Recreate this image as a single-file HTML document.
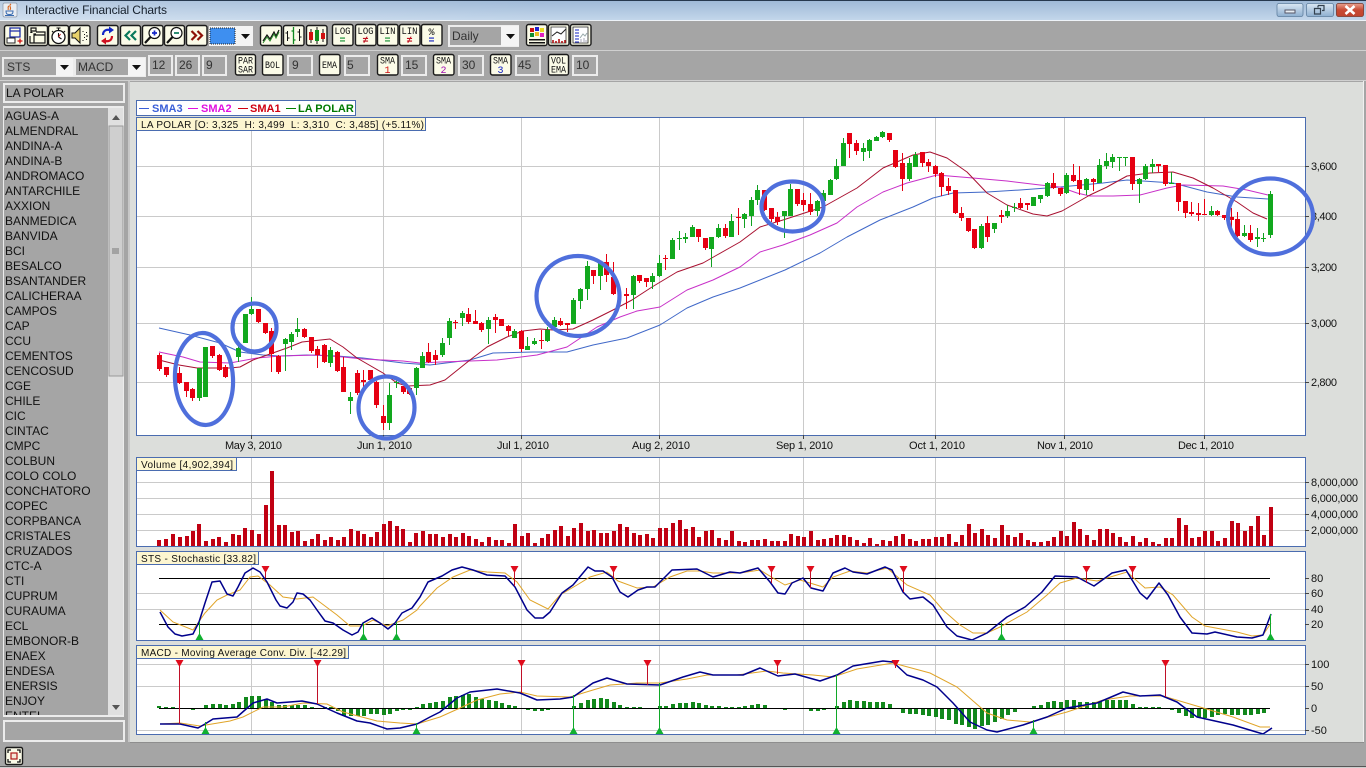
<!DOCTYPE html>
<html><head><meta charset="utf-8"><title>Interactive Financial Charts</title>
<style>
html,body{margin:0;padding:0;background:#a5a5a5;overflow:hidden}
svg{display:block}
text{font-family:"Liberation Sans",Arial,sans-serif;fill:#111}
.c{shape-rendering:crispEdges}
.btn{fill:#fbfbe8;stroke:#1a1a1a;stroke-width:1.4}
.inp{fill:#a5a5a5;stroke:#ececec;stroke-width:2}
.m{font-family:"Liberation Mono",monospace;font-size:10px}
.ax{font-size:11px;fill:#222}
.lb{font-size:10px;fill:#111;white-space:pre}
.li{font-size:12px;fill:#111}
.v{font-size:12px;fill:#333}
</style></head><body>
<svg width="1366" height="768" viewBox="0 0 1366 768" xmlns="http://www.w3.org/2000/svg">
<defs>
<linearGradient id="tb" x1="0" y1="0" x2="0" y2="1"><stop offset="0" stop-color="#9db8d6"/><stop offset="1" stop-color="#c3d6ea"/></linearGradient>
<linearGradient id="tb2" x1="0" y1="0" x2="1" y2="0"><stop offset="0" stop-color="#ffffff" stop-opacity=".25"/><stop offset=".4" stop-color="#ffffff" stop-opacity="0"/></linearGradient>
<linearGradient id="wb" x1="0" y1="0" x2="0" y2="1"><stop offset="0" stop-color="#dbe8f4"/><stop offset=".5" stop-color="#b4cbe2"/><stop offset="1" stop-color="#8fb0d0"/></linearGradient>
<linearGradient id="cb" x1="0" y1="0" x2="0" y2="1"><stop offset="0" stop-color="#e8a290"/><stop offset=".5" stop-color="#c84a34"/><stop offset="1" stop-color="#c0442e"/></linearGradient>
<clipPath id="lc"><rect x="3" y="108" width="104" height="607"/></clipPath>
</defs>

<!-- window background -->
<rect width="1366" height="768" fill="#a5a5a5"/>
<rect width="1366" height="20" fill="url(#tb)"/>
<rect width="1366" height="20" fill="url(#tb2)"/>
<rect class="c" width="1366" height="1" fill="#26384e"/>
<rect class="c" y="20" width="1366" height="1" fill="#eef3f8"/>
<rect class="c" y="50" width="1366" height="1" fill="#d0d0d0"/>
<rect class="c" y="80" width="1366" height="1" fill="#d0d0d0"/>

<!-- title -->
<rect x="3" y="3" width="14" height="14" rx="1.5" fill="#e9edf2" stroke="#8a97a8" stroke-width=".7"/>
<path d="M11 4c-3 2 1 3-1 6M9 6c-2 1 0 2-1 4" stroke="#d8641c" stroke-width="1.1" fill="none"/>
<path d="M6 11h7c0 3-1 3.500-3.500 3.500S6 14 6 11zM5 15.500h9" stroke="#3a6cb0" stroke-width="1" fill="none"/>
<text x="25" y="14" font-size="12" textLength="142" style="fill:#16202c">Interactive Financial Charts</text>
<rect x="1277" y="3.500" width="26" height="13" rx="2" fill="url(#wb)" stroke="#5f7f9f" stroke-width=".8"/>
<rect class="c" x="1285" y="10" width="10" height="3" fill="#e8eef4" stroke="#556" stroke-width=".8"/>
<rect x="1306.500" y="3.500" width="27" height="13" rx="2" fill="url(#wb)" stroke="#5f7f9f" stroke-width=".8"/>
<path d="M1318 5.500h6v5h-2M1318 5.500v2M1314.500 8.500h6v5.500h-6z" fill="none" stroke="#33404e" stroke-width="1.200"/>
<rect x="1336.500" y="3.500" width="27" height="13" rx="2" fill="url(#cb)" stroke="#7a3428" stroke-width=".8"/>
<path d="M1345.500 6l9 8M1354.500 6l-9 8" stroke="#fff" stroke-width="2.600"/>

<!-- toolbar 1 -->
<g>
<g transform="translate(4,25)"><rect class="btn" x=".5" y=".5" width="20.500" height="20" rx="2"/>
<path d="M6 3h10v9H6zM6 6h10" fill="none" stroke="#1c2ea8" stroke-width="1.300"/><path d="M3 13h8v5H3z" fill="#fff" stroke="#222"/><path d="M13.500 16h5M16 13.500v5" stroke="#d01010" stroke-width="1.300"/></g>
<g transform="translate(27,25)"><rect class="btn" x=".5" y=".5" width="20" height="20" rx="2"/>
<path d="M4 3h5v3H4zM9 7h9v11H7V9h2M7 10h11M3 11v7h4" fill="none" stroke="#111" stroke-width="1.200"/><path d="M4 6l-1 2h3z" fill="#111"/></g>
<g transform="translate(48,25)"><rect class="btn" x=".5" y=".5" width="20" height="20" rx="2"/>
<circle cx="10.500" cy="12" r="6.500" fill="#fff" stroke="#111" stroke-width="1.300"/><path d="M8.500 3h4M10.500 3v3M10.500 12V8M10.500 12l3 2M4 6l2 2M17 6l-2 2" stroke="#111" stroke-width="1.100"/><path d="M10.500 12l2-3" stroke="#c01010"/></g>
<g transform="translate(69,25)"><rect class="btn" x=".5" y=".5" width="20.500" height="20" rx="2"/>
<path d="M3 8h3l5-5v15l-5-5H3z" fill="#e8d26a" stroke="#111"/><path d="M14 6v1M15.500 9v1M15.500 12v1M14 15v1M17.500 7v1M18 10v2M17.500 14v1" stroke="#111"/></g>
<g transform="translate(97,25)"><rect class="btn" x=".5" y=".5" width="20.500" height="20" rx="2"/>
<path d="M6 10c0-4 3-6 7-5" fill="none" stroke="#1226c8" stroke-width="2.200"/><path d="M12 1.500l5 3.500-5 3.500z" fill="#1226c8"/><path d="M15 11c0 4-3 6-7 5" fill="none" stroke="#d01020" stroke-width="2.200"/><path d="M9 12.500l-5 3.500 5 3.500z" fill="#d01020"/></g>
<g transform="translate(120,25)"><rect class="btn" x=".5" y=".5" width="20" height="20" rx="2"/>
<path d="M10 6l-4.500 4.500 4.500 4.500M16 6l-4.500 4.500 4.500 4.500" fill="none" stroke="#0a7a5c" stroke-width="2.200"/></g>
<g transform="translate(142,25)"><rect class="btn" x=".5" y=".5" width="20.500" height="20" rx="2"/>
<circle cx="12.500" cy="8" r="5.500" fill="#fff" stroke="#111" stroke-width="1.200"/><path d="M8.500 12l-5.500 6" stroke="#111" stroke-width="2.200"/><path d="M10 8h5M12.500 5.500v5" stroke="#1426c8" stroke-width="1.700"/></g>
<g transform="translate(164,25)"><rect class="btn" x=".5" y=".5" width="20" height="20" rx="2"/>
<circle cx="12.500" cy="8" r="5.500" fill="#fff" stroke="#111" stroke-width="1.200"/><path d="M8.500 12l-5.500 6" stroke="#111" stroke-width="2.200"/><path d="M10 8h5" stroke="#0a7a5c" stroke-width="1.700"/></g>
<g transform="translate(186,25)"><rect class="btn" x=".5" y=".5" width="20.500" height="20" rx="2"/>
<path d="M5.500 6l4.500 4.500-4.500 4.500M11.500 6l4.500 4.500-4.500 4.500" fill="none" stroke="#8e1208" stroke-width="2.200"/></g>
<rect class="c" x="209" y="26" width="44" height="20" fill="#f4f4f4"/>
<rect class="c" x="210" y="28" width="25" height="16" fill="#3e8ff0" stroke="#222" stroke-dasharray="1 1"/>
<path d="M241 34h9l-4.500 5z" fill="#111"/>
<g transform="translate(260,25)"><rect class="btn" x=".5" y=".5" width="21" height="20" rx="2"/>
<path d="M3 16l4-6 3 4 4-7 2 4 3-6" fill="none" stroke="#111" stroke-width="1.200"/><path d="M3 18l4-6 3 4 4-7 2 4 3-6" fill="none" stroke="#2a8a2a"/></g>
<g transform="translate(283,25)"><rect class="btn" x=".5" y=".5" width="20.500" height="20" rx="2"/>
<path d="M4.500 6v10M2.500 8h2M4.500 13h2" stroke="#111"/><path d="M10.500 2v17M8.500 6h2M10.500 15h2" stroke="#108a20" stroke-width="1.300"/><path d="M16.500 4v12M14.500 7h2M16.500 12h2" stroke="#111"/></g>
<g transform="translate(306,25)"><rect class="btn" x=".5" y=".5" width="20.500" height="20" rx="2"/>
<path d="M5 4v14M11 2v17M17 4v13" stroke="#111"/><rect class="c" x="3" y="7" width="4" height="8" fill="#d01010"/><rect class="c" x="9" y="5" width="4" height="11" fill="#109020"/><rect class="c" x="15" y="8" width="4" height="6" fill="#d01010"/></g>
<g transform="translate(332,24)"><rect class="btn" x=".5" y=".5" width="20.500" height="21" rx="2"/>
<text class="m" x="10.500" y="10" text-anchor="middle" textLength="16" lengthAdjust="spacingAndGlyphs">LOG</text><text class="m" x="10.500" y="19" text-anchor="middle" style="fill:#109030;font-weight:bold">=</text></g>
<g transform="translate(355,24)"><rect class="btn" x=".5" y=".5" width="20.500" height="21" rx="2"/>
<text class="m" x="10.500" y="10" text-anchor="middle" textLength="16" lengthAdjust="spacingAndGlyphs">LOG</text><text class="m" x="10.500" y="19" text-anchor="middle" style="fill:#c01020;font-weight:bold">≠</text></g>
<g transform="translate(377,24)"><rect class="btn" x=".5" y=".5" width="20.500" height="21" rx="2"/>
<text class="m" x="10.500" y="10" text-anchor="middle" textLength="16" lengthAdjust="spacingAndGlyphs">LIN</text><text class="m" x="10.500" y="19" text-anchor="middle" style="fill:#109030;font-weight:bold">=</text></g>
<g transform="translate(399,24)"><rect class="btn" x=".5" y=".5" width="20.500" height="21" rx="2"/>
<text class="m" x="10.500" y="10" text-anchor="middle" textLength="16" lengthAdjust="spacingAndGlyphs">LIN</text><text class="m" x="10.500" y="19" text-anchor="middle" style="fill:#c01020;font-weight:bold">≠</text></g>
<g transform="translate(421,24)"><rect class="btn" x=".5" y=".5" width="20.500" height="21" rx="2"/>
<text class="m" x="10.500" y="11" text-anchor="middle" font-size="11">%</text><text class="m" x="10.500" y="19" text-anchor="middle" style="fill:#1020c0;font-weight:bold">=</text></g>
<rect class="c" x="449" y="26" width="69" height="20" fill="#a5a5a5" stroke="#ececec" stroke-width="2"/>
<rect class="c" x="501" y="26" width="18" height="20" fill="#f4f4f4"/>
<path d="M506 34h9l-4.500 5z" fill="#111"/>
<text class="v" x="452" y="40">Daily</text>
<g transform="translate(526,24)"><rect class="btn" x=".5" y=".5" width="20.500" height="21" rx="2"/>
<g class="c"><rect x="4" y="4" width="4" height="4" fill="#d01010"/><rect x="9" y="3" width="4" height="4" fill="#2020d0"/><rect x="14" y="4" width="4" height="4" fill="#e8d820"/><rect x="4" y="9" width="4" height="4" fill="#109030"/><rect x="9" y="8" width="4" height="4" fill="#e8c020"/><rect x="14" y="9" width="4" height="4" fill="#e020c0"/><rect x="3" y="15" width="16" height="1.500" fill="#111"/><rect x="3" y="18" width="16" height="1.500" fill="#111"/></g></g>
<g transform="translate(548,24)"><rect class="btn" x=".5" y=".5" width="20.500" height="21" rx="2"/>
<path d="M3 3h15v16H3z" fill="#fff" stroke="#333" stroke-width=".8"/><path d="M4 12l5-4 4 2 5-5" fill="none" stroke="#222"/><path d="M5 19v-3M8 19v-2M11 19v-4M14 19v-2M17 19v-3" stroke="#b01010" stroke-width="1.600"/></g>
<g transform="translate(570,24)"><rect class="btn" x=".5" y=".5" width="20.500" height="21" rx="2"/>
<path d="M3 3h15v16H3z" fill="#fff" stroke="#222" stroke-width=".8"/><path d="M5 6h4M5 9h4M5 12h4M5 15h4M5 18h4" stroke="#1020c0" stroke-width="1.100"/><path d="M10 14l3-4 2 2 2-3" fill="none" stroke="#9aa" /><path d="M11 18v-3M14 18v-4M16 18v-2" stroke="#aab" /></g>
</g>

<!-- toolbar 2 -->
<g>
<rect class="c" x="3" y="58" width="70" height="18" fill="#a5a5a5" stroke="#ececec" stroke-width="2"/>
<rect class="c" x="56" y="58" width="17" height="18" fill="#f4f4f4"/>
<path d="M60 65h9l-4.500 5z" fill="#111"/>
<text class="v" x="7" y="71">STS</text>
<rect class="c" x="75" y="58" width="70" height="18" fill="#a5a5a5" stroke="#ececec" stroke-width="2"/>
<rect class="c" x="128" y="58" width="17" height="18" fill="#f4f4f4"/>
<path d="M132 65h9l-4.500 5z" fill="#111"/>
<text class="v" x="78" y="71">MACD</text>
<rect class="c inp" x="149" y="56" width="23" height="19"/><text class="v" x="152" y="69">12</text>
<rect class="c inp" x="176" y="56" width="23" height="19"/><text class="v" x="179" y="69">26</text>
<rect class="c inp" x="203" y="56" width="23" height="19"/><text class="v" x="206" y="69">9</text>
<g transform="translate(235,54)"><rect class="btn" x=".5" y=".5" width="20" height="20.500" rx="2"/><text class="m" x="10.500" y="9.500" text-anchor="middle" textLength="15" lengthAdjust="spacingAndGlyphs">PAR</text><text class="m" x="10.500" y="18.500" text-anchor="middle" textLength="15" lengthAdjust="spacingAndGlyphs">SAR</text></g>
<g transform="translate(262,54)"><rect class="btn" x=".5" y=".5" width="20.500" height="20.500" rx="2"/><text class="m" x="10.500" y="14" text-anchor="middle" textLength="15" lengthAdjust="spacingAndGlyphs">BOL</text></g>
<rect class="c inp" x="288" y="56" width="24" height="19"/><text class="v" x="292" y="69">9</text>
<g transform="translate(319,54)"><rect class="btn" x=".5" y=".5" width="20.500" height="20.500" rx="2"/><text class="m" x="10.500" y="14" text-anchor="middle" textLength="15" lengthAdjust="spacingAndGlyphs">EMA</text></g>
<rect class="c inp" x="345" y="56" width="24" height="19"/><text class="v" x="347" y="69">5</text>
<g transform="translate(377,54)"><rect class="btn" x=".5" y=".5" width="20.500" height="20.500" rx="2"/><text class="m" x="10.500" y="9.500" text-anchor="middle" textLength="15" lengthAdjust="spacingAndGlyphs">SMA</text><text class="m" x="10.500" y="19" text-anchor="middle" style="fill:#d01010">1</text></g>
<rect class="c inp" x="402" y="56" width="24" height="19"/><text class="v" x="405" y="69">15</text>
<g transform="translate(433,54)"><rect class="btn" x=".5" y=".5" width="20.500" height="20.500" rx="2"/><text class="m" x="10.500" y="9.500" text-anchor="middle" textLength="15" lengthAdjust="spacingAndGlyphs">SMA</text><text class="m" x="10.500" y="19" text-anchor="middle" style="fill:#a010b0">2</text></g>
<rect class="c inp" x="459" y="56" width="24" height="19"/><text class="v" x="462" y="69">30</text>
<g transform="translate(490,54)"><rect class="btn" x=".5" y=".5" width="20.500" height="20.500" rx="2"/><text class="m" x="10.500" y="9.500" text-anchor="middle" textLength="15" lengthAdjust="spacingAndGlyphs">SMA</text><text class="m" x="10.500" y="19" text-anchor="middle" style="fill:#1020c0">3</text></g>
<rect class="c inp" x="516" y="56" width="24" height="19"/><text class="v" x="518" y="69">45</text>
<g transform="translate(548,54)"><rect class="btn" x=".5" y=".5" width="20" height="20.500" rx="2"/><text class="m" x="10.500" y="9.500" text-anchor="middle" textLength="15" lengthAdjust="spacingAndGlyphs">VOL</text><text class="m" x="10.500" y="18.500" text-anchor="middle" textLength="15" lengthAdjust="spacingAndGlyphs">EMA</text></g>
<rect class="c inp" x="573" y="56" width="24" height="19"/><text class="v" x="576" y="69">10</text>
</g>

<!-- left panel -->
<rect class="c" x="128" y="81" width="2" height="661" fill="#c8c8c8"/>
<rect class="c inp" x="4" y="84" width="120" height="18"/>
<text class="li" x="6" y="97">LA POLAR</text>
<rect class="c" x="3" y="106" width="121" height="611" fill="#ececec"/>
<rect class="c" x="4" y="108" width="104" height="607" fill="#a5a5a5"/>
<rect class="c" x="108" y="108" width="15" height="607" fill="#e0e0e0"/>
<rect class="c" x="109" y="126" width="14" height="250" fill="#cfcfcf" stroke="#9a9a9a" stroke-width=".8"/>
<path d="M112 249h7M112 251h7M112 253h7" stroke="#777" class="c"/>
<path d="M112 120h8l-4-5zM112 705h8l-4 5z" fill="#555"/>
<g clip-path="url(#lc)">
<text class="li" x="5" y="120">AGUAS-A</text><text class="li" x="5" y="135">ALMENDRAL</text><text class="li" x="5" y="150">ANDINA-A</text><text class="li" x="5" y="165">ANDINA-B</text><text class="li" x="5" y="180">ANDROMACO</text><text class="li" x="5" y="195">ANTARCHILE</text><text class="li" x="5" y="210">AXXION</text><text class="li" x="5" y="225">BANMEDICA</text><text class="li" x="5" y="240">BANVIDA</text><text class="li" x="5" y="255">BCI</text><text class="li" x="5" y="270">BESALCO</text><text class="li" x="5" y="285">BSANTANDER</text><text class="li" x="5" y="300">CALICHERAA</text><text class="li" x="5" y="315">CAMPOS</text><text class="li" x="5" y="330">CAP</text><text class="li" x="5" y="345">CCU</text><text class="li" x="5" y="360">CEMENTOS</text><text class="li" x="5" y="375">CENCOSUD</text><text class="li" x="5" y="390">CGE</text><text class="li" x="5" y="405">CHILE</text><text class="li" x="5" y="420">CIC</text><text class="li" x="5" y="435">CINTAC</text><text class="li" x="5" y="450">CMPC</text><text class="li" x="5" y="465">COLBUN</text><text class="li" x="5" y="480">COLO COLO</text><text class="li" x="5" y="495">CONCHATORO</text><text class="li" x="5" y="510">COPEC</text><text class="li" x="5" y="525">CORPBANCA</text><text class="li" x="5" y="540">CRISTALES</text><text class="li" x="5" y="555">CRUZADOS</text><text class="li" x="5" y="570">CTC-A</text><text class="li" x="5" y="585">CTI</text><text class="li" x="5" y="600">CUPRUM</text><text class="li" x="5" y="615">CURAUMA</text><text class="li" x="5" y="630">ECL</text><text class="li" x="5" y="645">EMBONOR-B</text><text class="li" x="5" y="660">ENAEX</text><text class="li" x="5" y="675">ENDESA</text><text class="li" x="5" y="690">ENERSIS</text><text class="li" x="5" y="705">ENJOY</text><text class="li" x="5" y="720">ENTEL</text>
</g>
<rect class="c inp" x="4" y="721" width="120" height="20"/>

<!-- chart panel -->
<rect class="c" x="130" y="82" width="1233" height="660" fill="#dcdedb"/>
<rect class="c" x="1363" y="81" width="1" height="662" fill="#f0f0f0"/>
<rect class="c" x="130" y="742" width="1234" height="1" fill="#8e8e8e"/>
<rect class="c" x="0" y="766" width="1366" height="1" fill="#555"/>
<rect class="c" x="0" y="767" width="1366" height="1" fill="#cfcfcf"/>
<g transform="translate(5,747)"><rect class="btn" x=".5" y=".5" width="17" height="17" rx="1.500"/>
<path d="M3 6V3h3M12 3h3v3M15 12v3h-3M6 15H3v-3" fill="none" stroke="#111" stroke-width="1.300"/><rect x="6" y="6" width="6" height="6" fill="#f4e8d8" stroke="#b01818" stroke-width="1.200"/></g>

<!-- panel backgrounds -->
<g class="c">
<rect x="137" y="118" width="1168" height="317" fill="#fff"/>
<rect x="137" y="458" width="1168" height="88" fill="#fff"/>
<rect x="137" y="552" width="1168" height="88" fill="#fff"/>
<rect x="137" y="646" width="1168" height="88" fill="#fff"/>
<path stroke="#cacaca" fill="none" d="M137 166.500H1305M137 216.500H1305M137 267.500H1305M137 323.500H1305M137 382.500H1305M137 482.500H1305M137 498.500H1305M137 514.500H1305M137 530.500H1305M137 593.500H1305M137 609.500H1305M137 664.500H1305M137 686.500H1305M137 730.500H1305M251.500 118V435M383.500 118V435M521.500 118V435M659.500 118V435M803.500 118V435M935.500 118V435M1064.500 118V435M1204.500 118V435M251.500 458V546M383.500 458V546M521.500 458V546M659.500 458V546M803.500 458V546M935.500 458V546M1064.500 458V546M1204.500 458V546M251.500 552V640M383.500 552V640M521.500 552V640M659.500 552V640M803.500 552V640M935.500 552V640M1064.500 552V640M1204.500 552V640M251.500 646V734M383.500 646V734M521.500 646V734M659.500 646V734M803.500 646V734M935.500 646V734M1064.500 646V734M1204.500 646V734"/>
</g>

<!-- SMA lines -->
<g fill="none" stroke-linejoin="round">
<polyline stroke="#4068c8" points="159,328 190,335 220,343 240,352 263,355 280,356 307,355 337,356 363,358 403,363 430,365 470,360 493,353 533,352 567,352 593,345 627,338 660,325 687,308 713,297 740,288 785,270 820,253 847,237 880,220 913,207 933,198 953,193 987,192 1020,190 1060,187 1103,183 1127,180 1173,183 1207,192 1237,197 1268,199"/>
<polyline stroke="#c830c8" points="159,352 183,357 200,362 230,363 257,358 280,356 317,355 343,357 363,359 403,361 420,363 440,362 470,361 497,360 537,355 567,347 597,327 620,317 637,311 660,307 687,290 713,280 740,267 760,252 783,245 810,235 837,223 857,207 883,192 907,183 937,175 973,178 1007,181 1040,185 1060,187 1077,193 1090,196 1113,196 1140,195 1167,188 1183,185 1223,186 1247,190 1268,195"/>
<polyline stroke="#a81030" points="159,360 179,365 197,368 230,368 240,367 253,360 270,354 287,348 302,342 330,339 343,347 357,358 383,373 397,383 407,386 430,385 445,380 470,360 487,347 507,337 523,331 540,329 553,330 573,329 593,320 613,310 632,300 652,287 677,272 703,263 717,255 740,242 760,227 783,220 823,207 857,188 883,168 913,155 930,152 947,158 967,172 987,193 1007,205 1033,214 1047,216 1062,211 1090,195 1107,187 1127,176 1150,173 1173,172 1193,178 1213,188 1237,202 1253,213 1267,219"/>
</g>

<!-- candles -->
<path fill="none" stroke="#e60012" class="c" d="M159.500 353V371M166.500 367V377M179.500 367V384M186.500 382V397M192.500 388V401M212.500 346V358M219.500 354V371M225.500 365V378M258.500 309V323M265.500 323V334M271.500 328V372M278.500 355V374M304.500 328V338M311.500 337V353M317.500 346V368M324.500 344V363M337.500 351V372M343.500 357V392M357.500 370V395M363.500 370V392M370.500 370V381M376.500 381V408M383.500 405V430M403.500 386V394M409.500 388V395M428.500 343V363M435.500 350V365M455.500 320V329M468.500 308V324M475.500 310V324M481.500 322V332M495.500 314V333M501.500 319V326M508.500 325V336M521.500 330V352M541.500 330V349M560.500 318V326M567.500 323V332M593.500 270V284M606.500 254V282M613.500 262V295M626.500 288V309M639.500 275V283M646.500 278V287M665.500 255V270M698.500 229V242M705.500 238V250M725.500 224V238M738.500 208V235M764.500 190V211M771.500 208V222M777.500 212V225M797.500 189V206M803.500 193V211M810.500 193V215M849.500 133V158M856.500 140V155M889.500 133V142M895.500 150V168M902.500 153V191M922.500 152V167M928.500 159V172M935.500 165V177M941.500 172V196M948.500 178V195M955.500 190V214M961.500 207V221M968.500 218V232M974.500 229V249M987.500 216V242M1001.500 210V223M1020.500 198V209M1027.500 203V210M1053.500 173V189M1060.500 188V196M1073.500 164V182M1079.500 166V195M1093.500 178V191M1132.500 157V190M1158.500 164V172M1165.500 165V186M1178.500 183V211M1185.500 201V218M1191.500 202V216M1198.500 203V221M1204.500 199V215M1217.500 210V216M1224.500 215V220M1231.500 208V229M1237.500 212V237M1250.500 225V242"/>
<path fill="none" stroke="#e60012" stroke-width="5" class="c" d="M159.500 355V369M166.500 367V375M179.500 373V383M186.500 382V391M192.500 389V398M212.500 346V356M219.500 355V370M225.500 367V377M258.500 309V322M265.500 323V333M271.500 331V354M278.500 356V372M304.500 329V337M311.500 337V351M317.500 349V355M324.500 345V362M337.500 352V371M343.500 367V392M357.500 373V393M363.500 380V382M370.500 370V380M376.500 382V405M383.500 416V423M403.500 386V392M409.500 388V394M428.500 352V362M435.500 355V360M455.500 322V323M468.500 314V322M475.500 321V324M481.500 323V330M495.500 317V320M501.500 319V326M508.500 326V331M521.500 331V349M541.500 340V341M560.500 321V325M567.500 323V325M593.500 270V276M606.500 262V275M613.500 277V294M626.500 294V296M639.500 275V281M646.500 278V282M665.500 258V259M698.500 229V237M705.500 238V248M725.500 228V236M738.500 217V218M764.500 190V210M771.500 208V219M777.500 217V222M797.500 189V204M803.500 200V205M810.500 204V212M849.500 133V144M856.500 143V151M889.500 133V140M895.500 150V167M902.500 163V179M922.500 152V163M928.500 162V166M935.500 166V174M941.500 173V187M948.500 186V191M955.500 190V213M961.500 213V218M968.500 218V231M974.500 229V248M987.500 223V237M1001.500 215V217M1020.500 203V208M1027.500 203V205M1053.500 183V188M1060.500 188V194M1073.500 175V181M1079.500 180V189M1093.500 179V182M1132.500 157V184M1158.500 164V166M1165.500 165V184M1178.500 183V202M1185.500 201V213M1191.500 212V214M1198.500 213V215M1204.500 214V215M1217.500 211V215M1224.500 215V218M1231.500 217V220M1237.500 219V236M1250.500 233V240"/>
<path fill="none" stroke="#10a020" class="c" d="M199.500 368V401M238.500 345V362M251.500 297V315M285.500 338V371M291.500 332V350M297.500 318V337M330.500 347V367M350.500 392V414M389.500 383V430M396.500 380V388M416.500 367V395M422.500 352V368M442.500 338V357M449.500 318V345M462.500 311V326M488.500 317V344M514.500 329V338M527.500 337V350M534.500 338V345M547.500 327V342M554.500 317V328M573.500 298V324M580.500 288V309M587.500 261V300M600.500 262V290M633.500 275V309M652.500 273V289M659.500 255V277M672.500 238V259M679.500 231V250M685.500 233V243M692.500 225V237M711.500 237V267M718.500 224V238M731.500 214V237M744.500 213V228M751.500 197V226M757.500 185V205M784.500 211V238M790.500 184V216M817.500 200V216M823.500 190V202M830.500 179V195M836.500 159V180M843.500 138V166M863.500 143V161M869.500 139V158M876.500 136V141M882.500 131V138M909.500 158V181M915.500 152V167M981.500 224V249M994.500 223V233M1007.500 205V218M1014.500 203V212M1033.500 197V206M1040.500 195V203M1047.500 182V197M1066.500 173V194M1086.500 178V195M1099.500 159V183M1106.500 153V169M1112.500 154V168M1119.500 157V171M1125.500 157V166M1139.500 178V203M1145.500 164V180M1152.500 159V173M1171.500 172V184M1211.500 206V216M1244.500 225V237M1257.500 228V247M1263.500 233V242M1270.500 191V238"/>
<path fill="none" stroke="#12a81e" stroke-width="5" class="c" d="M199.500 368V398M205.500 347V397M238.500 348V357M245.500 314V343M251.500 309V314M285.500 339V344M291.500 334V342M297.500 329V332M330.500 350V363M350.500 397V401M389.500 395V423M396.500 382V383M416.500 368V388M422.500 356V368M442.500 343V355M449.500 321V338M462.500 313V318M488.500 320V329M514.500 331V338M527.500 346V350M534.500 341V344M547.500 330V341M554.500 320V327M573.500 300V324M580.500 289V301M587.500 266V289M600.500 263V276M633.500 276V295M652.500 276V282M659.500 263V276M672.500 240V259M679.500 238V239M685.500 237V239M692.500 227V237M711.500 237V249M718.500 228V237M731.500 221V237M744.500 214V219M751.500 200V216M757.500 190V200M784.500 211V216M790.500 189V216M817.500 201V211M823.500 193V201M830.500 180V195M836.500 166V179M843.500 143V166M863.500 148V152M869.500 140V151M876.500 137V141M882.500 132V137M909.500 163V179M915.500 155V167M981.500 226V248M994.500 223V229M1007.500 211V216M1014.500 207V208M1033.500 197V206M1040.500 195V199M1047.500 183V196M1066.500 175V193M1086.500 179V190M1099.500 165V183M1106.500 161V166M1112.500 157V162M1119.500 157V158M1125.500 157V158M1139.500 179V184M1145.500 166V179M1152.500 164V167M1171.500 183V184M1211.500 211V215M1244.500 233V236M1257.500 237V239M1263.500 238V239M1270.500 194V235"/>

<!-- volume bars -->
<path fill="none" stroke="#c00012" stroke-width="4" class="c" d="M159 546v-6M166 546v-7M173 546v-12M180 546v-9M187 546v-10M193 546v-15M199 546v-22M206 546v-5M213 546v-7M219 546v-9M226 546v-4M233 546v-12M239 546v-11M245 546v-18M252 546v-16M259 546v-12M266 546v-41M272 546v-75M279 546v-21M285 546v-21M292 546v-14M298 546v-15M305 546v-5M312 546v-7M318 546v-12M325 546v-6M331 546v-9M338 546v-6M344 546v-9M351 546v-17M358 546v-15M364 546v-12M371 546v-9M377 546v-14M384 546v-22M390 546v-25M397 546v-20M403 546v-17M410 546v-4M416 546v-13M423 546v-15M430 546v-12M436 546v-12M443 546v-9M450 546v-12M456 546v-9M463 546v-13M469 546v-10M476 546v-7M482 546v-4M489 546v-9M496 546v-6M502 546v-6M509 546v-3M515 546v-22M522 546v-10M528 546v-13M535 546v-3M542 546v-8M548 546v-12M555 546v-16M561 546v-20M568 546v-10M574 546v-18M581 546v-23M588 546v-15M594 546v-16M601 546v-13M607 546v-13M614 546v-15M620 546v-22M627 546v-19M634 546v-13M640 546v-11M647 546v-12M653 546v-8M660 546v-18M666 546v-18M673 546v-23M680 546v-26M686 546v-17M693 546v-19M699 546v-9M706 546v-15M712 546v-16M719 546v-8M726 546v-6M732 546v-15M739 546v-5M745 546v-4M752 546v-6M758 546v-6M765 546v-7M772 546v-5M778 546v-5M785 546v-5M791 546v-12M798 546v-10M804 546v-9M811 546v-15M818 546v-6M824 546v-7M831 546v-8M837 546v-11M844 546v-11M850 546v-9M857 546v-6M864 546v-3M870 546v-8M877 546v-2M883 546v-6M890 546v-5M896 546v-10M903 546v-12M910 546v-7M916 546v-5M923 546v-7M929 546v-7M936 546v-9M942 546v-9M949 546v-12M956 546v-4M962 546v-11M969 546v-22M975 546v-13M982 546v-17M988 546v-11M995 546v-8M1002 546v-21M1008 546v-11M1015 546v-9M1021 546v-13M1028 546v-6M1034 546v-4M1041 546v-4M1048 546v-5M1054 546v-9M1061 546v-15M1067 546v-10M1074 546v-24M1080 546v-17M1087 546v-11M1094 546v-6M1100 546v-17M1107 546v-17M1113 546v-13M1120 546v-9M1126 546v-4M1133 546v-10M1140 546v-4M1146 546v-8M1153 546v-4M1159 546v-2M1166 546v-8M1172 546v-8M1179 546v-28M1186 546v-21M1192 546v-8M1199 546v-9M1205 546v-15M1212 546v-15M1218 546v-5M1225 546v-8M1232 546v-25M1238 546v-23M1245 546v-15M1251 546v-20M1258 546v-30M1264 546v-11M1271 546v-39"/>

<!-- stochastic -->
<path class="c" stroke="#000" d="M159 578.500H1270M159 624.500H1270"/>
<polyline fill="none" stroke="#e0a428" points="160,610 173,622 193,630 205,613 217,600 227,595 240,590 250,577 258,576 270,585 283,597 297,599 313,597 317,600 337,615 350,626 362,626 373,620 387,626 403,620 417,610 420,606 437,588 453,577 470,570 487,572 505,573 517,582 530,600 548,609 560,595 577,585 590,577 607,572 618,581 637,588 653,587 670,577 687,571 700,571 713,573 740,573 760,570 773,578 785,585 800,580 810,583 823,587 833,577 850,571 867,573 887,568 907,585 930,595 943,610 960,625 973,633 987,633 1000,627 1027,612 1047,595 1060,583 1077,578 1097,581 1117,575 1127,572 1145,588 1160,587 1173,595 1192,617 1205,626 1237,632 1252,636 1263,635 1271,623"/>
<polyline fill="none" stroke="#00008c" stroke-width="1.500" stroke-linejoin="round" points="160,612 168,627 175,634 182,636 193,634 199,622 205,603 212,582 220,581 227,594 233,596 238,587 245,573 253,568 260,572 267,582 276,600 280,606 287,608 293,602 297,593 303,594 310,600 317,610 325,621 333,623 343,630 352,635 358,632 363,623 372,618 380,623 388,629 395,623 402,613 412,608 420,597 428,582 442,576 452,570 462,567 473,570 487,575 505,576 515,587 527,610 535,618 543,618 550,612 562,593 573,585 588,567 595,571 603,571 612,577 620,592 628,597 638,590 647,587 655,587 672,570 697,569 713,577 730,572 740,573 758,568 770,582 778,593 785,594 792,583 803,578 811,588 823,591 833,573 845,568 853,572 867,574 885,567 892,570 903,592 910,599 923,597 933,605 947,627 957,636 972,640 987,633 1007,617 1025,607 1042,592 1055,576 1077,577 1094,586 1112,573 1126,570 1140,593 1147,599 1159,583 1168,595 1180,617 1192,633 1207,634 1215,632 1237,637 1252,638 1263,635 1271,614"/>
<path class="c" stroke="#c01028" d="M265.500 566V578M514.500 566V586M613.500 566V578M771.500 566V583M810.500 566V588M903.500 566V592M1086.500 566V583M1132.500 566V578"/>
<path fill="#e00c1c" d="M261.500 566h8l-4 7zM510.500 566h8l-4 7zM609.500 566h8l-4 7zM767.500 566h8l-4 7zM806.500 566h8l-4 7zM899.500 566h8l-4 7zM1082.500 566h8l-4 7zM1128.500 566h8l-4 7z"/>
<path class="c" stroke="#10a828" d="M199.500 622V640M363.500 623V640M396.500 622V640M1001.500 623V640M1270.500 614V640"/>
<path fill="#10b030" d="M195.500 640h8l-4-7zM359.500 640h8l-4-7zM392.500 640h8l-4-7zM997.500 640h8l-4-7zM1266.500 640h8l-4-7z"/>

<!-- macd -->
<path fill="none" stroke="#12881c" stroke-width="4" class="c" d="M159 708v-2M166 708v-1M173 708v-1M186 708v1M193 708v2M206 708v-3M213 708v-4M220 708v-4M226 708v-3M233 708v-4M239 708v-6M246 708v-11M252 708v-12M259 708v-12M266 708v-9M272 708v-6M279 708v-3M285 708v-3M292 708v-3M298 708v-3M305 708v-3M312 708v-1M325 708v-1M331 708v-1M338 708v3M344 708v8M351 708v8M358 708v8M364 708v8M371 708v6M377 708v6M384 708v7M390 708v6M397 708v3M403 708v2M410 708v2M417 708v-1M423 708v-4M430 708v-5M436 708v-6M443 708v-7M450 708v-11M456 708v-12M463 708v-13M469 708v-14M476 708v-11M482 708v-9M489 708v-8M496 708v-7M502 708v-5M509 708v-3M515 708v-2M528 708v2M535 708v3M542 708v3M548 708v2M574 708v-2M581 708v-5M588 708v-8M594 708v-9M601 708v-10M607 708v-9M614 708v-6M620 708v-3M627 708v-1M634 708v-1M640 708v-1M660 708v-2M666 708v-2M673 708v-4M680 708v-5M686 708v-5M693 708v-6M699 708v-5M706 708v-3M712 708v-2M719 708v-2M726 708v-1M732 708v-1M739 708v-1M745 708v-2M752 708v-3M758 708v-4M765 708v-3M778 708v1M785 708v2M798 708v1M804 708v1M811 708v3M818 708v3M824 708v2M837 708v-2M844 708v-6M850 708v-8M857 708v-7M864 708v-7M870 708v-6M877 708v-6M883 708v-6M890 708v-4M903 708v5M910 708v6M916 708v6M923 708v7M929 708v8M936 708v9M942 708v11M949 708v12M956 708v16M962 708v17M969 708v19M975 708v21M982 708v18M988 708v17M995 708v14M1002 708v11M1008 708v7M1015 708v4M1021 708v1M1034 708v-2M1041 708v-3M1048 708v-6M1054 708v-7M1061 708v-6M1067 708v-8M1074 708v-8M1080 708v-6M1087 708v-6M1094 708v-6M1100 708v-7M1107 708v-8M1113 708v-8M1120 708v-8M1126 708v-8M1133 708v-4M1140 708v-1M1146 708v-1M1153 708v-1M1159 708v-1M1172 708v2M1179 708v5M1186 708v8M1192 708v10M1199 708v9M1205 708v10M1212 708v9M1218 708v7M1225 708v6M1232 708v7M1238 708v7M1245 708v7M1251 708v7M1258 708v6M1264 708v5"/>
<path class="c" stroke="#000" d="M159 708.500H1270"/>
<polyline fill="none" stroke="#e0a428" points="160,724 180,723 200,726 230,721 243,717 263,707 283,707 303,703 327,704 343,712 377,721 400,723 417,724 440,717 460,708 477,700 500,694 520,692 537,696 570,697 593,690 610,685 637,683 660,683 687,679 707,675 737,675 767,671 783,673 813,675 833,677 857,669 893,663 930,673 957,687 987,713 1007,720 1030,722 1067,712 1103,700 1130,696 1163,696 1200,707 1233,717 1260,727 1270,727"/>
<polyline fill="none" stroke="#00008c" stroke-width="1.500" stroke-linejoin="round" points="160,724 180,724 198,728 205,724 213,719 237,717 253,703 267,699 277,703 290,702 302,701 317,704 337,713 357,721 370,723 387,729 400,728 417,724 430,717 440,712 457,698 470,692 497,689 520,693 537,700 560,699 573,697 593,683 607,678 627,684 660,685 683,677 700,672 713,675 743,675 760,668 778,676 795,674 820,681 837,675 853,666 883,661 893,662 907,675 923,680 937,687 953,703 970,722 987,730 997,732 1023,725 1047,717 1067,708 1097,703 1123,692 1140,696 1160,695 1177,702 1197,717 1233,725 1263,734 1272,728"/>
<path class="c" stroke="#c01028" d="M179.500 660V724M317.500 660V704M521.500 660V693M647.500 660V685M777.500 660V674M895.500 660V668M1165.500 660V697"/>
<path fill="#e00c1c" d="M175.500 660h8l-4 7zM313.500 660h8l-4 7zM517.500 660h8l-4 7zM643.500 660h8l-4 7zM773.500 660h8l-4 7zM891.500 660h8l-4 7zM1161.500 660h8l-4 7z"/>
<path class="c" stroke="#10a828" d="M205.500 722V734M416.500 723V734M573.500 695V734M659.500 683V734M836.500 675V734M1033.500 720V734"/>
<path fill="#10b030" d="M201.500 734h8l-4-7zM412.500 734h8l-4-7zM569.500 734h8l-4-7zM655.500 734h8l-4-7zM832.500 734h8l-4-7zM1029.500 734h8l-4-7z"/>

<!-- panel borders -->
<g class="c" fill="none" stroke="#4a6cb0">
<rect x="136.500" y="117.500" width="1169" height="318"/>
<rect x="136.500" y="457.500" width="1169" height="89"/>
<rect x="136.500" y="551.500" width="1169" height="89"/>
<rect x="136.500" y="645.500" width="1169" height="89"/>
<path d="M1305 166.500h4M1305 216.500h4M1305 267.500h4M1305 323.500h4M1305 382.500h4M1305 482.500h4M1305 498.500h4M1305 514.500h4M1305 530.500h4M1305 578.500h4M1305 593.500h4M1305 609.500h4M1305 624.500h4M1305 664.500h4M1305 686.500h4M1305 708.500h4M1305 730.500h4" stroke="#444"/>
<path d="M251.500 435v4M383.500 435v4M521.500 435v4M659.500 435v4M803.500 435v4M935.500 435v4M1064.500 435v4M1204.500 435v4" stroke="#444"/>
</g>

<!-- axis labels -->
<g class="ax">
<text x="1311" y="170" textLength="26">3,600</text><text x="1311" y="220" textLength="26">3,400</text><text x="1311" y="271" textLength="26">3,200</text><text x="1311" y="327" textLength="26">3,000</text><text x="1311" y="386" textLength="26">2,800</text>
<text x="1311" y="486" textLength="47">8,000,000</text><text x="1311" y="502" textLength="47">6,000,000</text><text x="1311" y="518" textLength="47">4,000,000</text><text x="1311" y="534" textLength="47">2,000,000</text>
<text x="1311" y="582">80</text><text x="1311" y="597">60</text><text x="1311" y="613">40</text><text x="1311" y="628">20</text>
<text x="1311" y="668">100</text><text x="1311" y="690">50</text><text x="1311" y="712">0</text><text x="1311" y="734">-50</text>
<text x="225" y="449" textLength="57">May 3, 2010</text><text x="357" y="449" textLength="55">Jun 1, 2010</text><text x="497" y="449" textLength="52">Jul 1, 2010</text><text x="632" y="449" textLength="58">Aug 2, 2010</text><text x="776" y="449" textLength="57">Sep 1, 2010</text><text x="909" y="449" textLength="56">Oct 1, 2010</text><text x="1037" y="449" textLength="56">Nov 1, 2010</text><text x="1178" y="449" textLength="56">Dec 1, 2010</text>
</g>

<!-- legend -->
<rect class="c" x="136.500" y="100.500" width="219" height="15" fill="#fff" stroke="#4a6cb0"/>
<path class="c" d="M139 108.500h10" stroke="#3a5fd8"/><text x="152" y="112" font-size="11" font-weight="bold" style="fill:#3a5fd8">SMA3</text>
<path class="c" d="M188 108.500h10" stroke="#e010e0"/><text x="201" y="112" font-size="11" font-weight="bold" style="fill:#e010e0">SMA2</text>
<path class="c" d="M238 108.500h10" stroke="#d00010"/><text x="250" y="112" font-size="11" font-weight="bold" style="fill:#d00010">SMA1</text>
<path class="c" d="M286 108.500h10" stroke="#008000"/><text x="298" y="112" font-size="11" font-weight="bold" style="fill:#007a00">LA POLAR</text>

<!-- info labels -->
<rect class="c" x="136.500" y="117.500" width="289" height="13" fill="#fdf6d0" stroke="#4a6cb0"/>
<text class="lb" x="141" y="128" textLength="283" xml:space="preserve">LA POLAR [O: 3,325  H: 3,499  L: 3,310  C: 3,485] (+5.11%)</text>
<rect class="c" x="136.500" y="457.500" width="100" height="13" fill="#fdf6d0" stroke="#4a6cb0"/>
<text class="lb" x="141" y="468" textLength="92">Volume [4,902,394]</text>
<rect class="c" x="136.500" y="551.500" width="122" height="13" fill="#fdf6d0" stroke="#4a6cb0"/>
<text class="lb" x="141" y="562" textLength="115">STS - Stochastic [33.82]</text>
<rect class="c" x="136.500" y="645.500" width="212" height="13" fill="#fdf6d0" stroke="#4a6cb0"/>
<text class="lb" x="141" y="656" textLength="205">MACD - Moving Average Conv. Div. [-42.29]</text>

<!-- hand drawn circles -->
<g fill="none" stroke="#4f6fdc" stroke-width="4.200">
<ellipse cx="204" cy="379" rx="29" ry="46" transform="rotate(-3 204 379)"/>
<ellipse cx="254.500" cy="327.500" rx="22" ry="24"/>
<ellipse cx="386.500" cy="407.500" rx="28" ry="31"/>
<ellipse cx="578" cy="296" rx="41.500" ry="40"/>
<ellipse cx="792.500" cy="206.500" rx="31" ry="25"/>
<ellipse cx="1270.500" cy="216.500" rx="42.500" ry="38"/>
</g>
</svg>
</body></html>
